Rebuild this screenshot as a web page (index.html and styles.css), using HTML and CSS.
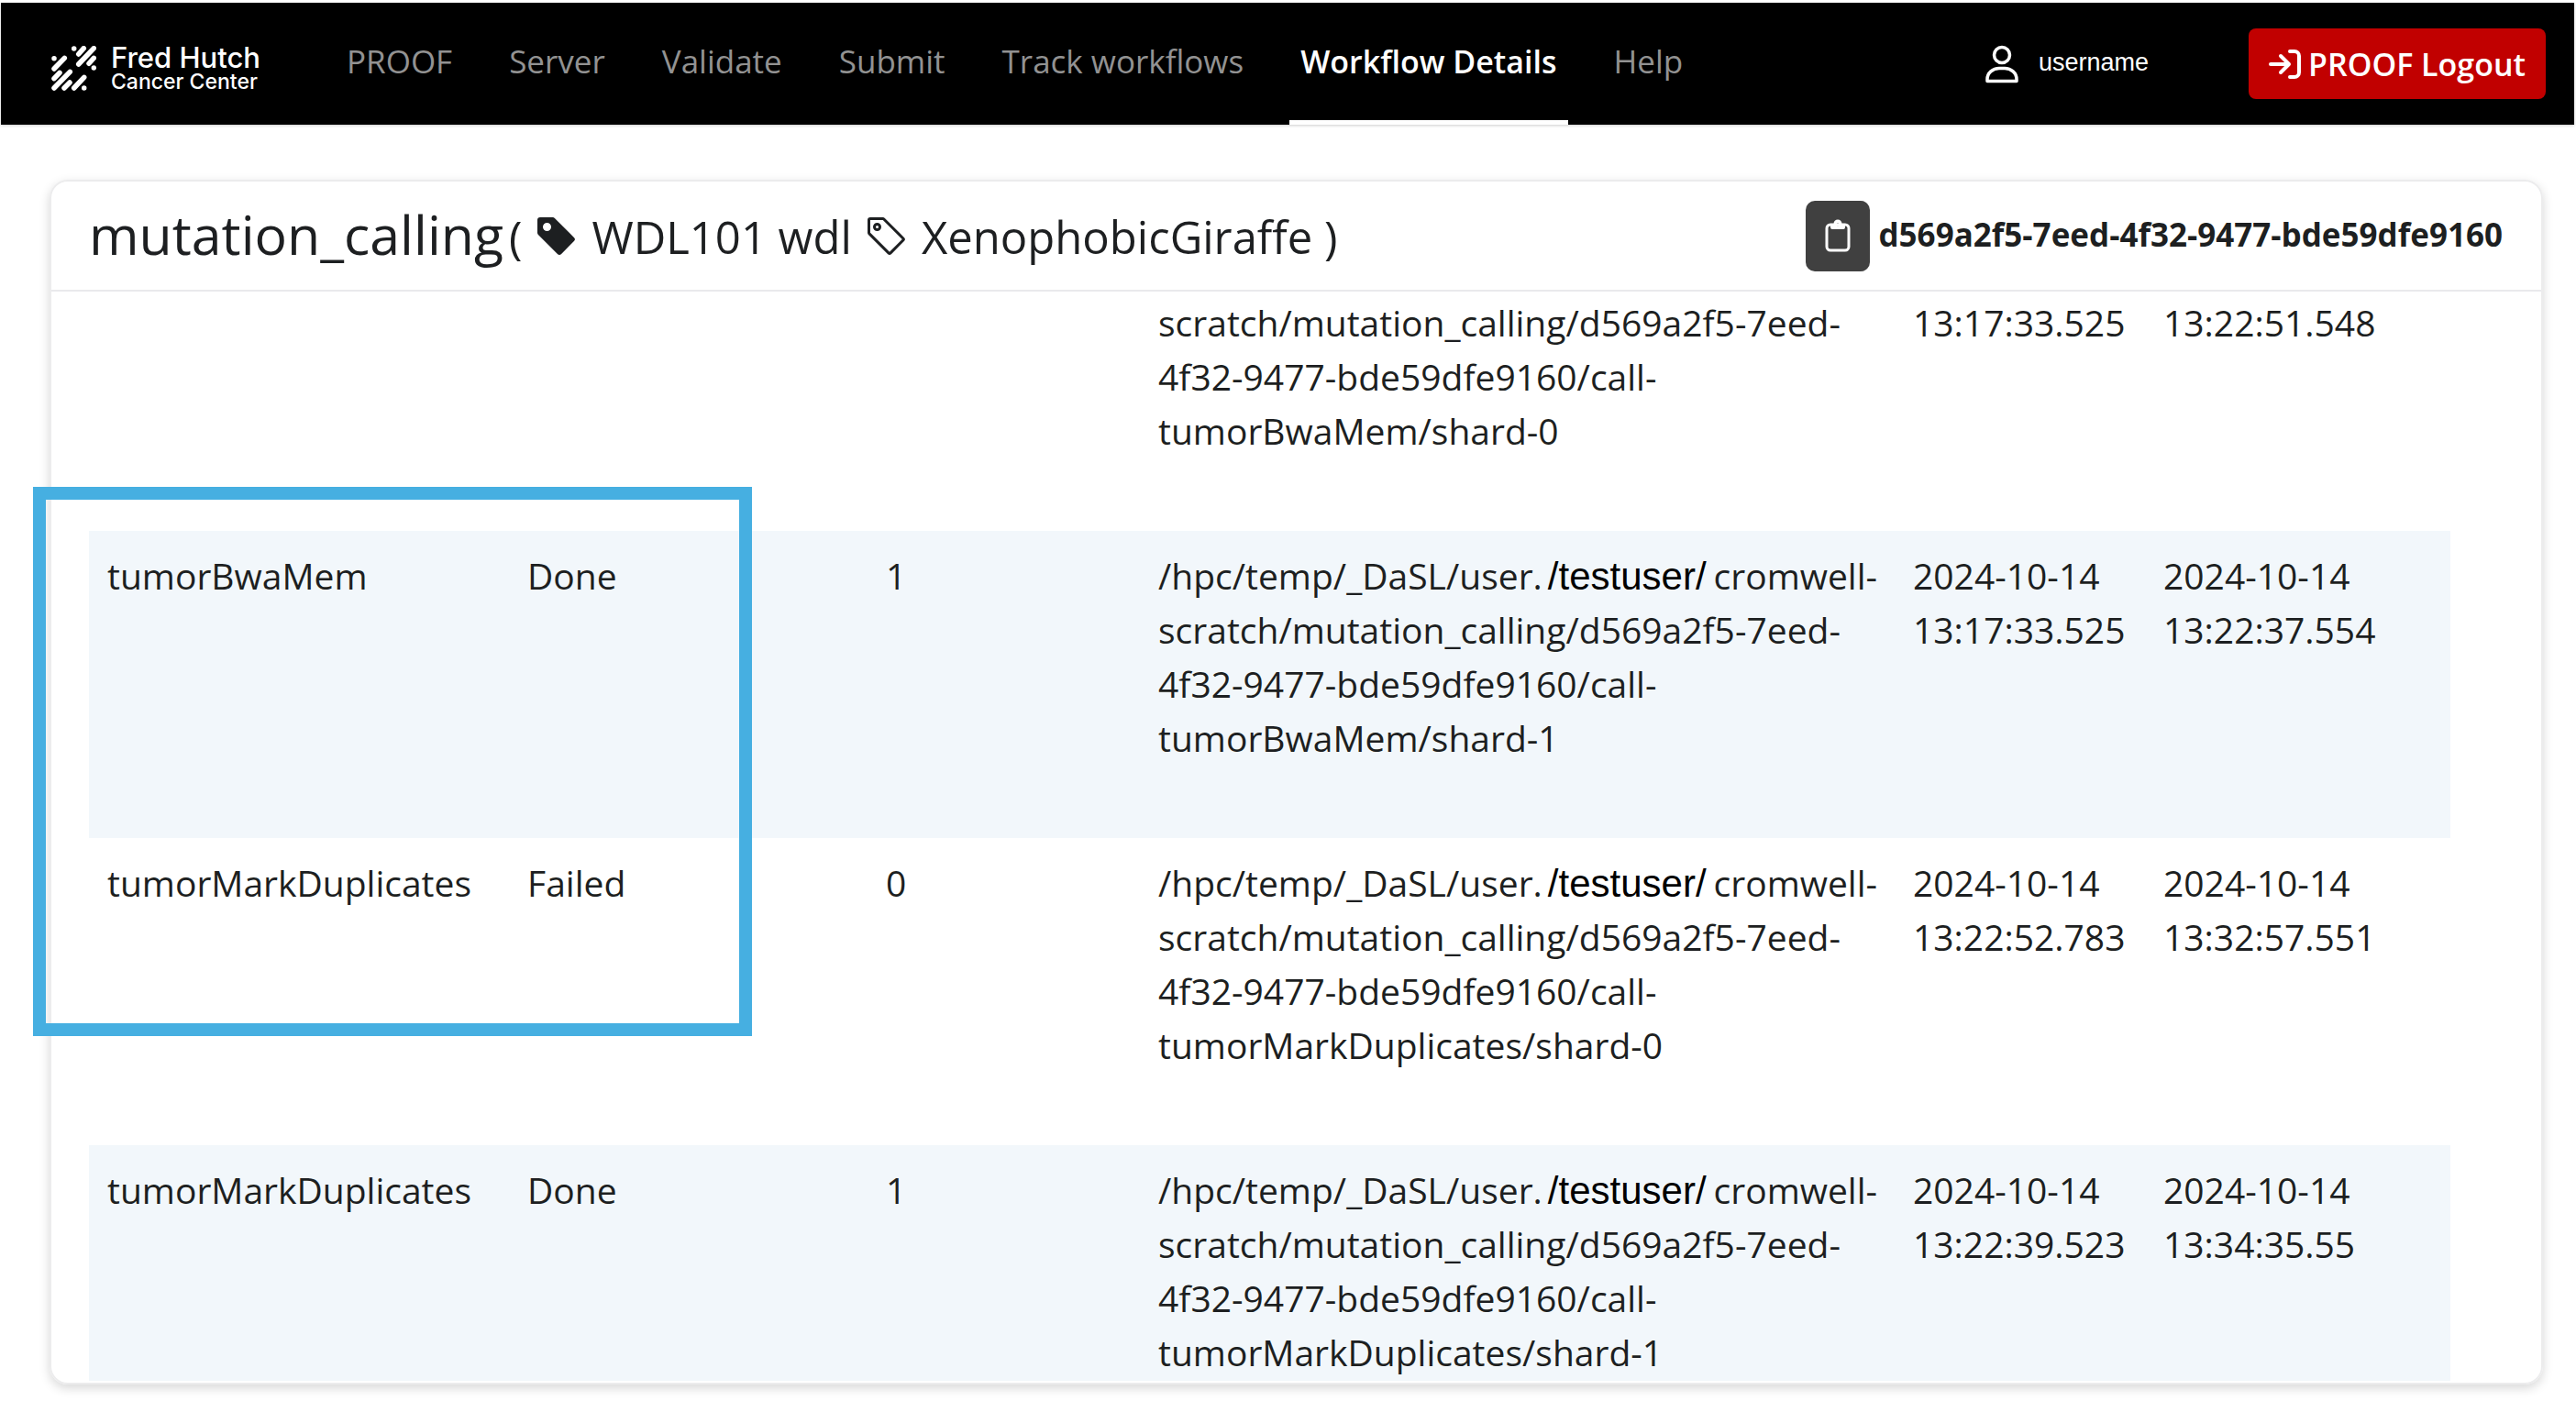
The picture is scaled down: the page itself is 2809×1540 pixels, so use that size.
FILE: index.html
```html
<!DOCTYPE html>
<html lang="en">
<head>
<meta charset="utf-8">
<meta name="viewport" content="width=device-width, initial-scale=1">
<title>PROOF – Workflow Details</title>
<link rel="stylesheet" href="styles.css">
</head>
<body>
<header class="topbar">
  <a class="brand" href="#" aria-label="Fred Hutch Cancer Center">
    <svg class="brand-mark" viewBox="0 0 49 49" aria-hidden="true">
      <path fill="none" stroke="#fff" stroke-width="5.500" stroke-linecap="round" d="M24.700 3h.01M35.300 2.700L29.700 9M46.300 2.700L29.700 20M46.300 13.300L41 19.300M46.300 24h.01M3 13.700h.01M14.300 13.300L3 25M9 29.300L3 35.700M20.300 28.300L3 46M20 40L14 46M35.700 34.300L24.700 46M35.700 46h.01"/>
    </svg>
    <span class="brand-text"><span class="brand-name">Fred Hutch</span><span class="brand-sub">Cancer Center</span></span>
  </a>
  <nav class="tabs" aria-label="Main">
    <a class="tab" href="#">PROOF</a>
    <a class="tab" href="#">Server</a>
    <a class="tab" href="#">Validate</a>
    <a class="tab" href="#">Submit</a>
    <a class="tab" href="#">Track workflows</a>
    <a class="tab is-active" href="#" aria-current="page">Workflow Details</a>
    <a class="tab" href="#">Help</a>
  </nav>
  <div class="account">
    <svg class="user-icon" viewBox="0 0 36 42" aria-hidden="true"><g fill="none" stroke="#fff" stroke-width="3.500"><ellipse cx="18" cy="11" rx="8.500" ry="8.500"/><path d="M2 39.500v-2c0-7 6-12 13-12h6c7 0 13 5 13 12v2z" stroke-linejoin="round"/></g></svg>
    <span class="username">username</span>
  </div>
  <button class="logout" type="button">
    <svg class="logout-icon" viewBox="0 0 35 32" aria-hidden="true"><g fill="none" stroke="#fff" stroke-width="4" stroke-linecap="round" stroke-linejoin="round"><path d="M2 16h20M13 7l9 9-9 9M23 2h5a5 5 0 0 1 5 5v18a5 5 0 0 1-5 5h-5"/></g></svg>
    PROOF Logout
  </button>
</header>

<main class="page">
  <section class="card">
    <div class="card-header">
      <h1 class="title">mutation_calling</h1>
      <div class="labels">
        <span>(</span>
        <svg class="tag-icon" viewBox="0 0 16 16" aria-hidden="true"><path fill="currentColor" d="M2 1a1 1 0 0 0-1 1v4.586a1 1 0 0 0 .293.707l7 7a1 1 0 0 0 1.414 0l4.586-4.586a1 1 0 0 0 0-1.414l-7-7A1 1 0 0 0 6.586 1zm4 3.500a1.500 1.500 0 1 1-3 0 1.500 1.500 0 0 1 3 0"/></svg>
        <span>WDL101 wdl</span>
        <svg class="tag-icon" viewBox="0 0 16 16" aria-hidden="true"><path fill="currentColor" d="M6 4.500a1.500 1.500 0 1 1-3 0 1.500 1.500 0 0 1 3 0m-1 0a.5.5 0 1 0-1 0 .5.5 0 0 0 1 0"/><path fill="currentColor" d="M2 1h4.586a1 1 0 0 1 .707.293l7 7a1 1 0 0 1 0 1.414l-4.586 4.586a1 1 0 0 1-1.414 0l-7-7A1 1 0 0 1 1 6.586V2a1 1 0 0 1 1-1m0 5.586 7 7L13.586 9l-7-7H2z"/></svg>
        <span>XenophobicGiraffe )</span>
      </div>
      <div class="run-id">
        <button class="copy" type="button" aria-label="Copy workflow ID">
          <svg class="copy-icon" viewBox="0 0 28 36" aria-hidden="true"><rect x="2" y="6" width="24" height="28" rx="4" fill="none" stroke="currentColor" stroke-width="3"/><path fill="currentColor" fill-rule="evenodd" d="M9.500 5a4.500 4.500 0 0 1 9 0H20a2 2 0 0 1 2 2v2a2 2 0 0 1-2 2H8a2 2 0 0 1-2-2V7a2 2 0 0 1 2-2zM14 4.200a1.500 1.500 0 1 0 0 3 1.500 1.500 0 0 0 0-3z"/></svg>
        </button>
        <strong>d569a2f5-7eed-4f32-9477-bde59dfe9160</strong>
      </div>
    </div>
    <div class="card-body">
      <table class="calls">
        <colgroup><col class="c-name"><col class="c-status"><col class="c-shard"><col class="c-path"><col class="c-start"><col class="c-end"></colgroup>
        <tbody>
          <tr class="continued"><td></td><td></td><td></td><td>scratch/mutation_calling/d569a2f5-7eed-4f32-9477-bde59dfe9160/call-tumorBwaMem/shard-0</td><td>13:17:33.525</td><td>13:22:51.548</td></tr>
          <tr><td>tumorBwaMem</td><td>Done</td><td>1</td><td>/hpc/temp/_DaSL/user.<span class="account-name">/testuser/</span>cromwell-scratch/mutation_calling/d569a2f5-7eed-4f32-9477-bde59dfe9160/call-tumorBwaMem/shard-1</td><td>2024-10-14 13:17:33.525</td><td>2024-10-14 13:22:37.554</td></tr>
          <tr><td>tumorMarkDuplicates</td><td>Failed</td><td>0</td><td>/hpc/temp/_DaSL/user.<span class="account-name">/testuser/</span>cromwell-scratch/mutation_calling/d569a2f5-7eed-4f32-9477-bde59dfe9160/call-tumorMarkDuplicates/shard-0</td><td>2024-10-14 13:22:52.783</td><td>2024-10-14 13:32:57.551</td></tr>
          <tr><td>tumorMarkDuplicates</td><td>Done</td><td>1</td><td>/hpc/temp/_DaSL/user.<span class="account-name">/testuser/</span>cromwell-scratch/mutation_calling/d569a2f5-7eed-4f32-9477-bde59dfe9160/call-tumorMarkDuplicates/shard-1</td><td>2024-10-14 13:22:39.523</td><td>2024-10-14 13:34:35.55</td></tr>
        </tbody>
      </table>
    </div>
  </section>
  <div class="highlight" aria-hidden="true"></div>
</main>
</body>
</html>
```
FILE: styles.css
```css
* { box-sizing: border-box; }

body {
  margin: 0;
  height: 100vh;
  display: flex;
  flex-direction: column;
  background: #fff;
  color: #1d1f21;
  font-family: "Open Sans", "Noto Sans", sans-serif;
  font-size: 35px;
}

a { color: inherit; text-decoration: none; }
button { border: 0; font: inherit; }

/* Top bar */
.topbar {
  display: flex;
  align-items: center;
  flex: none;
  height: 133px;
  margin: 3px 2px 0 1px;
  padding: 0 31px 0 55px;
  background: #000;
  box-shadow: 0 1px 3px rgba(0, 0, 0, .2);
}

.brand {
  display: flex;
  align-items: center;
  gap: 16px;
  width: 310px;
  padding-top: 10px;
  color: #fff;
  font-family: Inter, sans-serif;
  font-weight: 500;
}
.brand-mark { width: 49px; height: 49px; }
.brand-text { display: flex; flex-direction: column; }
.brand-name { font-size: 31px; line-height: 28px; }
.brand-sub { font-size: 23px; line-height: 24px; }

.tabs {
  display: flex;
  align-self: stretch;
  gap: 38px;
  flex: 1;
}
.tab {
  padding: 40px 12px 0;
  color: #929292;
  line-height: 48px;
}
.tab.is-active {
  border-bottom: 5px solid #fff;
  color: #fff;
  font-size: 34px;
  font-weight: 600;
}

.account {
  display: flex;
  align-items: center;
  gap: 22px;
  margin-right: 109px;
  color: #fff;
  font-family: "Liberation Sans", Arial, sans-serif;
  font-size: 27px;
}
.user-icon { width: 36px; height: 42px; }
.username { padding-bottom: 2px; }

.logout {
  display: flex;
  align-items: center;
  gap: 8px;
  height: 77px;
  padding: 0 22px;
  border-radius: 8px;
  background: #c10000;
  color: #fff;
  font-size: 34px;
  font-weight: 600;
}
.logout-icon { width: 35px; height: 32px; }

/* Card */
.page {
  position: relative;
  display: flex;
  flex: 1;
  min-height: 0;
  padding: 60px 36px 30px 54px;
}
.card {
  display: flex;
  flex-direction: column;
  flex: 1;
  min-width: 0;
  border: 2px solid #ececed;
  border-radius: 20px;
  overflow: hidden;
  box-shadow: 0 4px 12px rgba(0, 0, 0, .16);
}
.card-header {
  display: flex;
  align-items: center;
  flex: none;
  height: 120px;
  padding: 0 42px 0 41px;
  border-bottom: 2px solid #e9e9ec;
}
.title {
  margin: 0;
  padding-bottom: 4px;
  font-size: 59px;
  font-weight: 400;
  line-height: 78px;
}
.labels {
  display: flex;
  align-items: center;
  gap: 14px;
  flex: 1;
  padding: 2px 0 0 6px;
  font-size: 49px;
  line-height: 72px;
}
.tag-icon { width: 48px; height: 48px; }

.run-id {
  display: flex;
  align-items: center;
  gap: 9px;
}
.run-id strong { padding-bottom: 4px; font-weight: 700; }
.copy {
  display: grid;
  place-items: center;
  width: 70px;
  height: 77px;
  padding: 0;
  border-radius: 10px;
  background: #404040;
  color: #fff;
}
.copy-icon { width: 28px; height: 36px; }

.card-body {
  flex: 1;
  min-height: 0;
  margin-bottom: 2px;
  padding: 0 99px 0 41px;
  overflow: auto;
  scrollbar-width: none;
}

/* Task calls */
.calls {
  width: 100%;
  border-collapse: collapse;
  table-layout: fixed;
  font-size: 39px;
  line-height: 59px;
}
.calls td {
  padding: 19px 0 80px 20px;
  vertical-align: top;
}
.calls .continued td { padding-top: 4px; }
.calls tr:nth-child(even) { background: #f2f7fb; }
.c-name { width: 458px; }
.c-status { width: 391px; }
.c-shard { width: 297px; }
.c-path { width: 823px; }
.c-start { width: 273px; }

.account-name {
  padding: 0 8px 0 6px;
  color: #000;
  font-family: "Liberation Sans", Arial, sans-serif;
  font-size: 42px;
  line-height: 1;
}

/* Callout drawn over the task names and their status */
.highlight {
  position: absolute;
  top: 395px;
  left: 36px;
  width: 784px;
  height: 599px;
  border: 14px solid #46afe1;
  pointer-events: none;
}
```
